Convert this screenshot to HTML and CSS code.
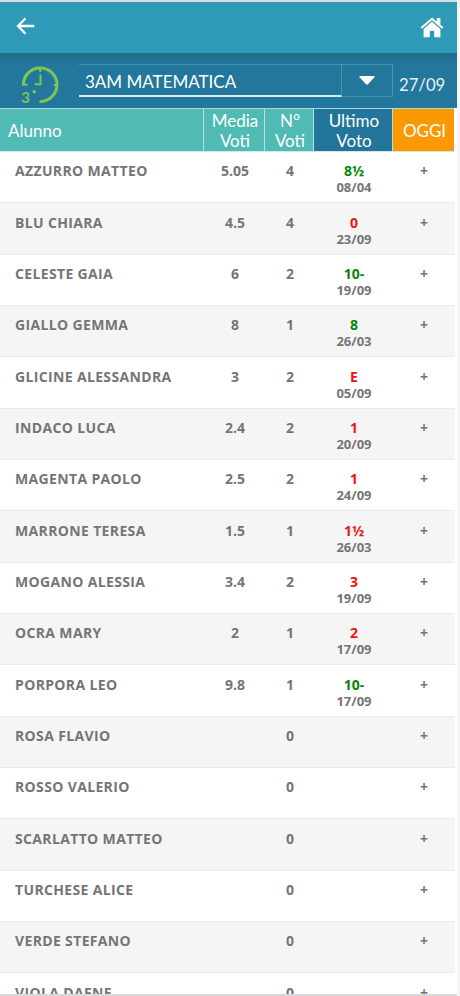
FILE: index.html
```html
<!DOCTYPE html>
<html lang="it">
<head>
    <meta charset="UTF-8">
    <meta name="viewport" content="width=device-width, initial-scale=1.0">
    <title>Registro voti</title>
    <link rel="stylesheet" href="styles.css">
</head>
<body>

<div class="app">
    <header class="topbar">
        <svg class="back" viewBox="0 0 20 18" width="20" height="18"><path d="M19.300 9H3.500M10.500 1.200L3 9l7.500 7.800"/></svg>
        <svg class="home" viewBox="0 0 24 21" width="24" height="21"><path d="M12 4.800L3.600 12v8.200h6.200v-6.400h4.400v6.400h6.200V12z"/><path d="M12 .6L.6 10.300l1.300 1.500L12 3.300l10.100 8.500 1.300-1.500-3-2.600V1h-3.600v3.500z"/></svg>
    </header>

    <div class="classbar">
        <svg class="clock" viewBox="0 0 40 40" width="40" height="40">
            <path class="ring" d="M3.400 20A16.800 16.800 0 1 1 19.500 36.500"/>
            <path class="hands" d="M2 19.800h5.500M20.300 2v5M38 20h-4M20.500 9.500v9.800h-5.800"/>
            <circle cx="14.200" cy="26.800" r="1.700"/>
            <text x="1.300" y="37.800">3</text>
        </svg>
        <div class="select">
            <span class="value">3AM MATEMATICA</span>
            <span class="arrow"><svg viewBox="0 0 16 9" width="16" height="9"><path d="M1 0h14q1 .3.400 1.200L9 8.300q-1 .8-2 0L.600 1.200Q0 .3 1 0z"/></svg></span>
        </div>
        <span class="date">27/09</span>
    </div>

    <div class="thead">
        <div class="left">Alunno</div>
        <div>Media<br>Voti</div>
        <div>N°<br>Voti</div>
        <div class="last">Ultimo<br>Voto</div>
        <div class="today">OGGI</div>
    </div>

    <div class="rows">
        <div class="row"><span class="name">AZZURRO MATTEO</span><span>5.05</span><span>4</span><span><b class="ok">8½</b><small>08/04</small></span><span class="add">+</span></div>
        <div class="row"><span class="name">BLU CHIARA</span><span>4.5</span><span>4</span><span><b class="ko">0</b><small>23/09</small></span><span class="add">+</span></div>
        <div class="row"><span class="name">CELESTE GAIA</span><span>6</span><span>2</span><span><b class="ok">10-</b><small>19/09</small></span><span class="add">+</span></div>
        <div class="row"><span class="name">GIALLO GEMMA</span><span>8</span><span>1</span><span><b class="ok">8</b><small>26/03</small></span><span class="add">+</span></div>
        <div class="row"><span class="name">GLICINE ALESSANDRA</span><span>3</span><span>2</span><span><b class="ko">E</b><small>05/09</small></span><span class="add">+</span></div>
        <div class="row"><span class="name">INDACO LUCA</span><span>2.4</span><span>2</span><span><b class="ko">1</b><small>20/09</small></span><span class="add">+</span></div>
        <div class="row"><span class="name">MAGENTA PAOLO</span><span>2.5</span><span>2</span><span><b class="ko">1</b><small>24/09</small></span><span class="add">+</span></div>
        <div class="row"><span class="name">MARRONE TERESA</span><span>1.5</span><span>1</span><span><b class="ko">1½</b><small>26/03</small></span><span class="add">+</span></div>
        <div class="row"><span class="name">MOGANO ALESSIA</span><span>3.4</span><span>2</span><span><b class="ko">3</b><small>19/09</small></span><span class="add">+</span></div>
        <div class="row"><span class="name">OCRA MARY</span><span>2</span><span>1</span><span><b class="ko">2</b><small>17/09</small></span><span class="add">+</span></div>
        <div class="row"><span class="name">PORPORA LEO</span><span>9.8</span><span>1</span><span><b class="ok">10-</b><small>17/09</small></span><span class="add">+</span></div>
        <div class="row"><span class="name">ROSA FLAVIO</span><span></span><span>0</span><span></span><span class="add">+</span></div>
        <div class="row"><span class="name">ROSSO VALERIO</span><span></span><span>0</span><span></span><span class="add">+</span></div>
        <div class="row"><span class="name">SCARLATTO MATTEO</span><span></span><span>0</span><span></span><span class="add">+</span></div>
        <div class="row"><span class="name">TURCHESE ALICE</span><span></span><span>0</span><span></span><span class="add">+</span></div>
        <div class="row"><span class="name">VERDE STEFANO</span><span></span><span>0</span><span></span><span class="add">+</span></div>
        <div class="row"><span class="name">VIOLA DAFNE</span><span></span><span>0</span><span></span><span class="add">+</span></div>
    </div>
</div>

</body>
</html>
```
FILE: styles.css
```css
* {
    box-sizing: border-box;
}
body {
    margin: 0;
    background: #f5f5f9;
    font-family: Lato, sans-serif;
    overflow: hidden;
}
.app {
    display: flex;
    flex-direction: column;
    width: 457px;
    height: 996px;
    border-top: 2px solid #d5dfe3;
    border-bottom: 2px solid #d9d9d9;
    background: white;
    overflow: hidden;
}
.topbar {
    display: flex;
    flex: none;
    justify-content: space-between;
    align-items: flex-start;
    height: 51px;
    padding: 15px 13px 0 15px;
    background: #2e9ab8;
}
.back {
    fill: none;
    stroke: white;
    stroke-width: 2.3;
}
.home {
    fill: white;
}
.classbar {
    display: flex;
    flex: none;
    height: 55px;
    background: linear-gradient(#206c89, #23779c 10px);
}
.clock {
    margin: 12px 19px 0 20px;
    fill: #7cc656;
}
.clock path {
    fill: none;
    stroke: #7cc656;
    stroke-width: 3;
}
.clock .hands {
    stroke-width: 2;
}
.clock text {
    font-size: 15px;
    font-weight: bold;
}
.select {
    display: flex;
    width: 314px;
    height: 33px;
    margin-top: 11px;
    border: 1px solid #4698b1;
    border-left: none;
    color: white;
}
.value {
    width: 263px;
    height: 32px;
    padding-left: 6px;
    border-right: 1px solid #4698b1;
    border-bottom: 2px solid #d3eaf1;
    font-size: 17px;
    line-height: 33px;
}
.arrow {
    flex: 1;
    padding-top: 11px;
    text-align: center;
    line-height: 0;
    fill: white;
}
.date {
    margin-left: 6px;
    color: #e4f2f6;
    font-size: 16.7px;
    line-height: 65px;
}
.thead {
    display: grid;
    grid-template-columns: 204px 61px 49px 79px 61px;
    flex: none;
    width: 454px;
    height: 44px;
    border-top: 1px solid #a9dcd8;
    border-bottom: 1px solid #d5e8e7;
    color: white;
    font-size: 17px;
    line-height: 20px;
    text-align: center;
}
.thead div {
    display: flex;
    justify-content: center;
    align-items: center;
    padding-top: 2px;
    padding-left: 2px;
    border-right: 1px solid #b5e0dc;
    background: #50bab4;
}
.thead .left {
    justify-content: flex-start;
    padding-left: 8px;
}
.thead .last {
    background: #23759b;
}
.thead .today {
    border-right: none;
    background: #fa9903;
}
.rows {
    width: 455px;
    color: #757575;
    font-family: "Open Sans", sans-serif;
    font-size: 14px;
    font-weight: bold;
    line-height: 16px;
    text-align: center;
}
.row {
    display: grid;
    grid-template-columns: 204px 62px 48px 80px 60px;
    height: 51.33px;
    padding-top: 11.4px;
    border-bottom: 1px solid #ebebeb;
}
.row:nth-child(even) {
    background: #f5f5f5;
}
.name {
    padding-left: 15px;
    letter-spacing: 0.35px;
    text-align: left;
}
.row b,
.row small {
    display: block;
    font-weight: 700;
}
.row small {
    font-size: 13px;
    line-height: 16px;
}
.ok {
    color: #078507;
}
.ko {
    color: #f31212;
}
```
